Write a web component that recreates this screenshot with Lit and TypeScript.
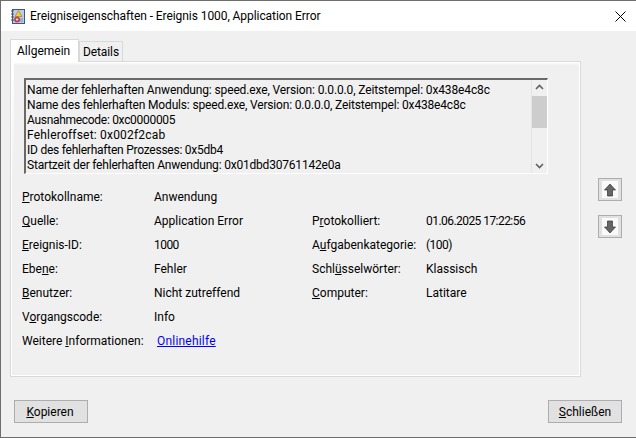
import { LitElement, html, css } from "lit";
import { customElement } from "lit/decorators.js";
import { classMap } from "lit/directives/class-map.js";

const rows: [any, string, any?, string?][] = [
  [html`<u>P</u>rotokollname:`, "Anwendung"],
  [html`<u>Q</u>uelle:`, "Application Error", html`P<u>r</u>otokolliert:`, "01.06.2025 17:22:56"],
  [html`<u>E</u>reignis-ID:`, "1000", html`A<u>u</u>fgabenkategorie:`, "(100)"],
  [html`Ebe<u>n</u>e:`, "Fehler", html`Schl<u>ü</u>sselwörter:`, "Klassisch"],
  [html`<u>B</u>enutzer:`, "Nicht zutreffend", html`<u>C</u>omputer:`, "Latitare"],
  [html`V<u>o</u>rgangscode:`, "Info"],
];

const lines: [string, number][] = [
  ["Name der fehlerhaften Anwendung: speed.exe, Version: 0.0.0.0, Zeitstempel: 0x438e4c8c", -0.13],
  ["Name des fehlerhaften Moduls: speed.exe, Version: 0.0.0.0, Zeitstempel: 0x438e4c8c", -0.17],
  ["Ausnahmecode: 0xc0000005", -0.3],
  ["Fehleroffset: 0x002f2cab", 0.2],
  ["ID des fehlerhaften Prozesses: 0x5db4", -0.24],
  ["Startzeit der fehlerhaften Anwendung: 0x01dbd30761142e0a", -0.2],
];

@customElement("app-root")
export class AppRoot extends LitElement {
  static styles = css`
    :host { display: block; width: 636px; height: 438px; font-family: Roboto, "Open Sans", sans-serif; font-size: 12px; color: #000; }
    * { box-sizing: border-box; }
    .win { width: 636px; height: 438px; border: 1px solid #6e6e6e; border-right: 0; background: #f0f0f0; display: flex; flex-direction: column; overflow: hidden; }
    .title { height: 30px; background: #fff; display: flex; align-items: center; padding: 0 0 0 9px; gap: 4px; flex: none; }
    .title span { flex: 1; letter-spacing: -0.07px; }
    .close { width: 21px; display: flex; justify-content: flex-start; }
    .tabs { display: flex; padding: 8px 0 0 9px; height: 30px; align-items: flex-end; flex: none; }
    .tab { border: 1px solid #d9d9d9; border-bottom: 0; height: 20px; width: 44px; padding: 0 3px; display: flex; align-items: center; background: #f0f0f0; letter-spacing: -0.1px; }
    .tab.on { background: #fff; padding: 0 6px; position: relative; z-index: 1; margin-bottom: -1px; height: 23px; width: 69px; letter-spacing: 0; }
    .body { display: flex; flex: none; }
    .panel { margin-left: 9px; width: 571px; height: 316px; border: 1px solid #d9d9d9; background: linear-gradient(#fff, #f0f0f0 110px) left top / 3px 100% no-repeat, linear-gradient(#fff, #f0f0f0) left top / 100% 3px no-repeat, #f0f0f0; box-shadow: inset 1px 1px 0 #fff, inset -1px -1px 0 #fff; padding: 16px 0 0 13px; }
    .box { width: 524px; height: 96px; background: #f0f0f0; border: 1px solid #fff; border-top: 2px solid #696969; border-left: 2px solid #696969; display: flex; }
    .msg { flex: 1; padding: 3px 0 0 1px; line-height: 15px; white-space: nowrap; overflow: hidden; }
    .sb { width: 16px; flex: none; border-left: 1px solid #e4e4e4; display: flex; flex-direction: column; justify-content: space-between; position: relative; }
    .sb svg { margin: 4px auto; display: block; }
    .thumb { position: absolute; left: 0; right: 0; top: 16px; height: 32px; background: #cdcdcd; }
    .rows { margin-top: 11px; margin-left: -2px; display: flex; flex-direction: column; }
    .row { height: 24px; display: grid; grid-template-columns: 132px 158px 114px 1fr; align-items: center; white-space: nowrap; }
    .row.more { grid-template-columns: 135px 1fr; }
    .num { letter-spacing: -0.55px; }
    a { color: #0000ff; text-decoration: underline; letter-spacing: 0.2px; }
    .side { width: 55px; display: flex; flex-direction: column; align-items: flex-start; padding: 117px 0 0 17px; gap: 14px; }
    .sq { width: 24px; height: 23px; border: 1px solid #adadad; padding: 2px 3px; background: #e1e1e1; }
    .sq div { width: 100%; height: 100%; background: #fafafa; display: flex; align-items: center; justify-content: center; }
    .foot { display: flex; justify-content: space-between; padding: 23px 14px 0 13px; flex: none; }
    .btn { width: 74px; height: 23px; border: 1px solid #adadad; background: #e1e1e1; display: flex; align-items: center; justify-content: center; }
    .btn.first span { margin-right: 2px; }
  `;
  render() {
    const isNum = (v?: string) => /^[\d.:() ]+$/.test(v ?? "");
    return html`<div class="win">
      <div class="title">
        <svg width="16" height="16" viewBox="0 0 16 16">
          <rect x="2.5" y="1.5" width="12" height="14" fill="#b9cdee" stroke="#44557a"></rect>
          <path d="M1 3h3M1 6h3M1 9h3M1 12h3" stroke="#555" stroke-width="1"></path>
          <path d="M6 11h7M6 13h7" stroke="#7a8fb8"></path>
          <path d="M8.5 2.5l3.5 6h-7z" fill="#f4cb3a" stroke="#9a7a10" stroke-width=".6"></path>
          <circle cx="7" cy="11.5" r="2.6" fill="#d8484f" stroke="#8f2a30" stroke-width=".6"></circle>
          <circle cx="7" cy="11.5" r="1" fill="#fff"></circle>
        </svg>
        <span>Ereigniseigenschaften - Ereignis 1000, Application Error</span>
        <div class="close"><svg width="11" height="11" viewBox="0 0 11 11"><path d="M.5.5l10 10M10.5.5l-10 10" stroke="#000" fill="none"></path></svg></div>
      </div>
      <div class="tabs"><div class="tab on">Allgemein</div><div class="tab">Details</div></div>
      <div class="body">
        <div class="panel">
          <div class="box">
            <div class="msg">${lines.map(([l, s]) => html`<div style="letter-spacing:${s}px">${l}</div>`)}</div>
            <div class="sb">
              <svg width="9" height="6" viewBox="0 0 9 6"><path d="M1 5l3.5-3.5L8 5" stroke="#606060" stroke-width="1.6" fill="none"></path></svg>
              <div class="thumb"></div>
              <svg width="9" height="6" viewBox="0 0 9 6"><path d="M1 1l3.5 3.5L8 1" stroke="#606060" stroke-width="1.6" fill="none"></path></svg>
            </div>
          </div>
          <div class="rows">
            ${rows.map((r) => html`<div class="row"><div>${r[0]}</div><div class=${classMap({ num: isNum(r[1]) })}>${r[1]}</div><div>${r[2] ?? ""}</div><div class=${classMap({ num: isNum(r[3]) })}>${r[3] ?? ""}</div></div>`)}
            <div class="row more"><div>Weitere <u>I</u>nformationen:</div><div><a>Onlinehilfe</a></div></div>
          </div>
        </div>
        <div class="side">
          <div class="sq"><div><svg width="14" height="14" viewBox="0 0 14 14"><path d="M7 1L1.5 7H4.5V13H9.5V7H12.5z" fill="#666" stroke="#333" stroke-width=".7"></path></svg></div></div>
          <div class="sq"><div><svg width="14" height="14" viewBox="0 0 14 14"><path d="M7 13L1.5 7H4.5V1H9.5V7H12.5z" fill="#666" stroke="#333" stroke-width=".7"></path></svg></div></div>
        </div>
      </div>
      <div class="foot">
        <div class="btn first"><span><u>K</u>opieren</span></div>
        <div class="btn"><span><u>S</u>chließen</span></div>
      </div>
    </div>`;
  }
}
